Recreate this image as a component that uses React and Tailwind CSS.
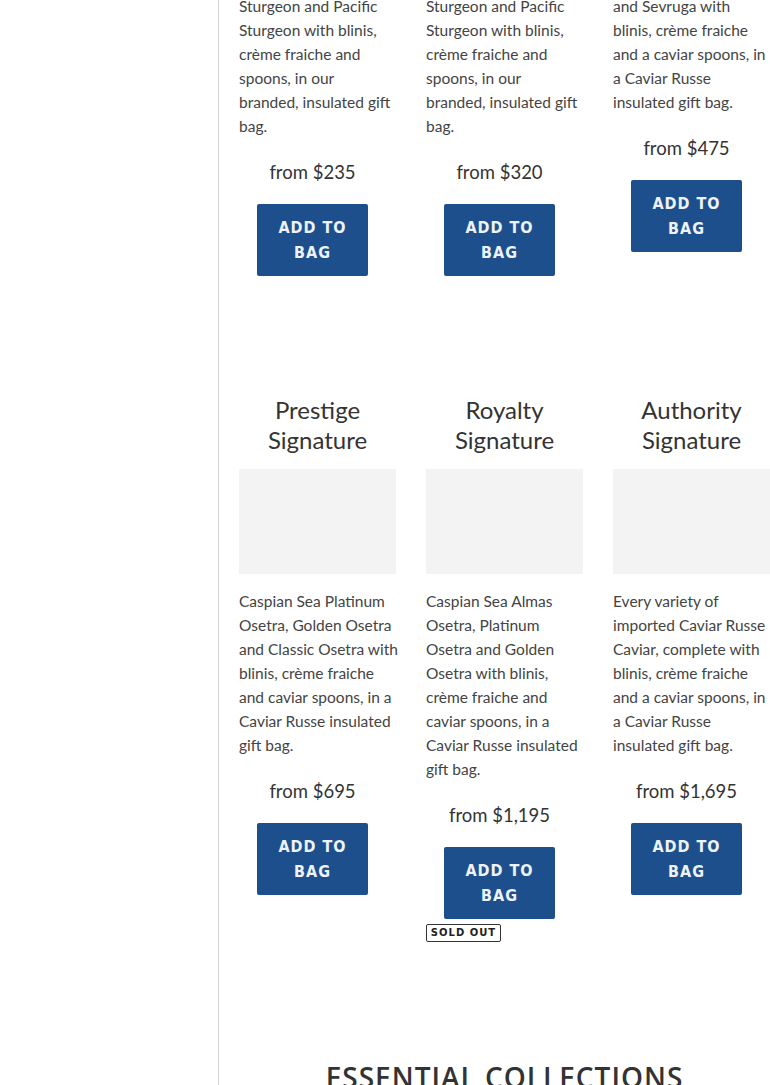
import React from 'react';

const topRow = [
  {
    lines: ['Sturgeon and Pacific', 'Sturgeon with blinis,', 'crème fraiche and', 'spoons, in our', 'branded, insulated gift', 'bag.'],
    price: 'from $235',
  },
  {
    lines: ['Sturgeon and Pacific', 'Sturgeon with blinis,', 'crème fraiche and', 'spoons, in our', 'branded, insulated gift', 'bag.'],
    price: 'from $320',
  },
  {
    lines: ['and Sevruga with', 'blinis, crème fraiche', 'and a caviar spoons, in', 'a Caviar Russe', 'insulated gift bag.'],
    price: 'from $475',
  },
];

const signatures = [
  {
    title: ['Prestige', 'Signature'],
    lines: ['Caspian Sea Platinum', 'Osetra, Golden Osetra', 'and Classic Osetra with', 'blinis, crème fraiche', 'and caviar spoons, in a', 'Caviar Russe insulated', 'gift bag.'],
    price: 'from $695',
  },
  {
    title: ['Royalty', 'Signature'],
    lines: ['Caspian Sea Almas', 'Osetra, Platinum', 'Osetra and Golden', 'Osetra with blinis,', 'crème fraiche and', 'caviar spoons, in a', 'Caviar Russe insulated', 'gift bag.'],
    price: 'from $1,195',
    soldOut: true,
  },
  {
    title: ['Authority', 'Signature'],
    lines: ['Every variety of', 'imported Caviar Russe', 'Caviar, complete with', 'blinis, crème fraiche', 'and a caviar spoons, in', 'a Caviar Russe', 'insulated gift bag.'],
    price: 'from $1,695',
  },
];

const AddToBag = () => (
  <button className="mt-[18px] w-[111px] h-[72px] rounded-[2px] bg-[#1d4f8c] text-[#eef3fb] font-['DejaVu_Sans_Condensed','DejaVu_Sans',sans-serif] font-bold text-[16px] leading-[25px] tracking-[1px] flex flex-col items-center justify-center">
    <span>ADD TO</span>
    <span>BAG</span>
  </button>
);

const Product = ({ item }) => (
  <div className="flex flex-col">
    <p className="text-[15.5px] leading-[24px] text-[#444] whitespace-nowrap">
      {item.lines.map((l, i) => (
        <span key={i} className="block">{l}</span>
      ))}
    </p>
    <div className="pr-[10px] flex flex-col items-center">
      <div className="mt-[20px] h-[28px] text-[18.5px] leading-[28px] text-[#333]">{item.price}</div>
      <AddToBag />
    </div>
    {item.soldOut && (
      <span className="mt-[5px] self-start w-[75px] h-[18px] border border-[#333] rounded-[2px] flex items-center justify-center whitespace-nowrap font-['DejaVu_Sans',sans-serif] font-bold text-[10px] leading-none tracking-[1px] text-[#222]">
        SOLD OUT
      </span>
    )}
  </div>
);

export default function App() {
  return (
    <div className="w-[770px] h-[1085px] overflow-hidden bg-white font-['Lato',sans-serif]">
      <div className="flex w-[789px]">
        <aside className="w-[219px] shrink-0 border-r border-[#d4d4d4] min-h-[1085px]" />
        <main className="w-[570px] pl-[20px] pr-[19px]">
          <div className="grid grid-cols-3 gap-x-[30px] mt-[-6px]">
            {topRow.map((item, i) => (
              <Product key={i} item={item} />
            ))}
          </div>

          <div className="grid grid-cols-3 gap-x-[30px] mt-[119px] items-start">
            {signatures.map((item, i) => (
              <div key={i} className="flex flex-col">
                <h3 className="text-center text-[24px] leading-[30px] text-[#333]">
                  {item.title.map((t, j) => (
                    <span key={j} className="block">{t}</span>
                  ))}
                </h3>
                <div className="mt-[14px] mb-[15px] h-[105px] bg-[#f3f3f3]" />
                <Product item={item} />
              </div>
            ))}
          </div>

          <h2 className="mt-[117px] text-center text-[28px] leading-[36px] tracking-[1px] font-semibold text-[#333] font-['Open_Sans',sans-serif]">
            ESSENTIAL COLLECTIONS
          </h2>
        </main>
      </div>
    </div>
  );
}
